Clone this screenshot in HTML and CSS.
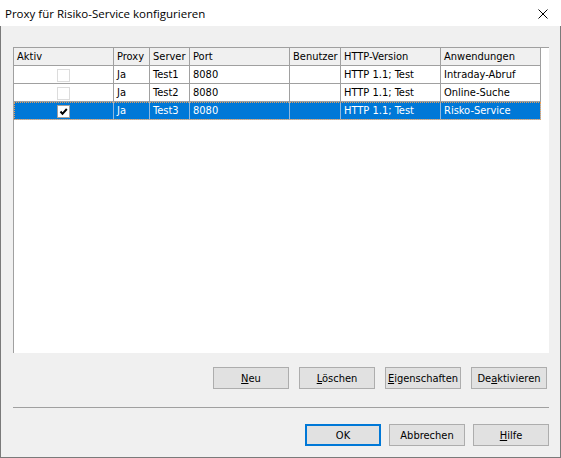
FILE: index.html
```html
<!DOCTYPE html>
<html lang="de">
<head>
<meta charset="utf-8">
<title>Proxy für Risiko-Service konfigurieren</title>
<link rel="stylesheet" href="styles.css">
</head>
<body>
<div class="window">
  <div class="titlebar">
    <span class="title">Proxy für Risiko-Service konfigurieren</span>
    <svg class="close" width="10" height="10" viewBox="0 0 10 10"><path d="M0.5 0.5 L9.5 9.5 M9.5 0.5 L0.5 9.5" stroke="#000" stroke-width="1" fill="none"/></svg>
  </div>
  <div class="client">
    <div class="list">
      <div class="row head">
        <div class="cell">Aktiv</div>
        <div class="cell">Proxy</div>
        <div class="cell">Server</div>
        <div class="cell">Port</div>
        <div class="cell">Benutzer</div>
        <div class="cell">HTTP-Version</div>
        <div class="cell">Anwendungen</div>
      </div>
      <div class="row">
        <div class="cell center"><span class="cb"></span></div>
        <div class="cell">Ja</div>
        <div class="cell">Test1</div>
        <div class="cell">8080</div>
        <div class="cell"></div>
        <div class="cell">HTTP 1.1; Test</div>
        <div class="cell">Intraday-Abruf</div>
      </div>
      <div class="row">
        <div class="cell center"><span class="cb"></span></div>
        <div class="cell">Ja</div>
        <div class="cell">Test2</div>
        <div class="cell">8080</div>
        <div class="cell"></div>
        <div class="cell">HTTP 1.1; Test</div>
        <div class="cell">Online-Suche</div>
      </div>
      <div class="row selected">
        <div class="cell center"><span class="cb checked"><svg width="11" height="11" viewBox="0 0 11 11"><path d="M2.5 5.5 L4.5 7.8 L8.8 3" stroke="#000" stroke-width="2" fill="none"/></svg></span></div>
        <div class="cell">Ja</div>
        <div class="cell">Test3</div>
        <div class="cell">8080</div>
        <div class="cell"></div>
        <div class="cell">HTTP 1.1; Test</div>
        <div class="cell">Risko-Service</div>
      </div>
    </div>
    <div class="actions">
      <button class="btn"><u>N</u>eu</button>
      <button class="btn"><u>L</u>öschen</button>
      <button class="btn"><u>E</u>igenschaften</button>
      <button class="btn">De<u>a</u>ktivieren</button>
    </div>
    <div class="sep"></div>
    <div class="footer">
      <button class="btn default">OK</button>
      <button class="btn">Abbrechen</button>
      <button class="btn"><u>H</u>ilfe</button>
    </div>
  </div>
</div>
</body>
</html>
```

FILE: styles.css
```css
html, body {
  margin: 0;
  padding: 0;
  background: #f0f0f0;
}

.window {
  width: 561px;
  height: 458px;
  display: flex;
  flex-direction: column;
  box-sizing: border-box;
  font-family: "DejaVu Sans Condensed", "Liberation Sans", sans-serif;
  font-size: 11px;
  color: #000;
}

.titlebar {
  height: 26px;
  flex: 0 0 26px;
  background: #fff;
  display: flex;
  align-items: center;
  justify-content: space-between;
  padding: 0 13px 0 5px;
}

.title {
  font-family: "Open Sans", "Noto Sans", sans-serif;
  font-size: 11.5px;
  color: #000;
}

.close {
  display: block;
  margin-top: 1px;
}

.client {
  flex: 1;
  background: #f0f0f0;
  border: 1px solid #7a7a7a;
  border-top: none;
  padding: 21px 11px 0 12px;
  display: flex;
  flex-direction: column;
}

.list {
  height: 306px;
  flex: 0 0 306px;
  box-sizing: border-box;
  background: #fff;
  border-left: 1px solid #a0a0a0;
  border-top: 1px solid #a0a0a0;
}

.row {
  display: grid;
  grid-template-columns: 100px 36px 40px 100px 51px 100px 100px;
  width: 527px;
  height: 18px;
}

.cell {
  box-sizing: border-box;
  height: 18px;
  border-right: 1px solid #a0a0a0;
  border-bottom: 1px solid #a0a0a0;
  padding: 1px 0 0 3px;
  line-height: 16px;
  white-space: nowrap;
  overflow: hidden;
}

.head .cell {
  background: #f0f0f0;
}

.cell.center {
  display: flex;
  justify-content: center;
  align-items: center;
  padding: 1px 0 0 0;
}

.cb {
  width: 13px;
  height: 13px;
  box-sizing: border-box;
  border: 1px solid #dcdcdc;
  background: #fff;
  display: flex;
  align-items: center;
  justify-content: center;
}

.cb.checked {
  border-color: #a0a0a0;
}

.cb svg {
  display: block;
}

.selected {
  background: #0078d7;
  color: #fff;
  outline: 1px dotted #e9a05a;
  outline-offset: -1px;
}

.selected .cell {
  border-color: #8fb8df;
}

.actions {
  display: flex;
  justify-content: flex-end;
  gap: 10px;
  margin-top: 14px;
  margin-right: 2px;
}

.sep {
  height: 1px;
  background: #a0a0a0;
  margin-top: 18px;
}

.footer {
  display: flex;
  justify-content: flex-end;
  gap: 8px;
  margin-top: 16px;
}

.btn {
  width: 76px;
  height: 22px;
  box-sizing: border-box;
  margin: 0;
  padding: 0;
  background: #e1e1e1;
  border: 1px solid #adadad;
  border-radius: 0;
  font-family: "DejaVu Sans Condensed", "Liberation Sans", sans-serif;
  font-size: 11px;
  color: #000;
  text-align: center;
}

.btn.default {
  border: 2px solid #0078d7;
}
```
